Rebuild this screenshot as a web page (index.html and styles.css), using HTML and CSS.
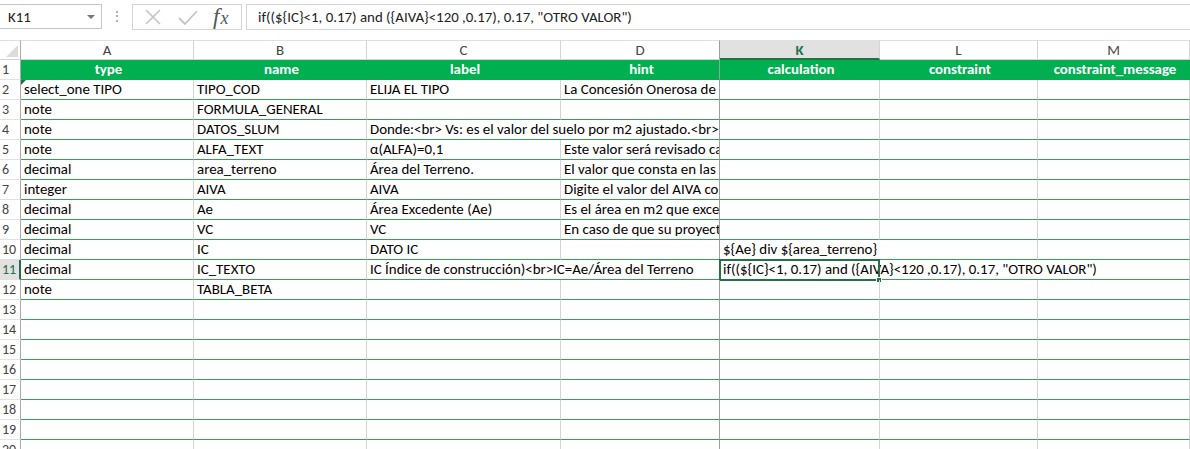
FILE: index.html
```html
<!DOCTYPE html>
<html lang="es">
<head>
<meta charset="utf-8">
<title>Hoja</title>
<link rel="stylesheet" href="styles.css">
</head>
<body>
<div class="app">
  <div class="fbar">
    <div class="namebox"><span class="nb-text">K11</span><span class="nb-arrow"></span></div>
    <div class="vdots">⋮</div>
    <div class="btns">
      <svg class="ic" width="20" height="20" viewBox="0 0 20 20"><path d="M3 3 L17 17 M17 3 L3 17" stroke="#c4c4c4" stroke-width="1.6" fill="none"/></svg>
      <svg class="ic" width="22" height="20" viewBox="0 0 22 20"><path d="M2 11 L8 17 L20 4" stroke="#c4c4c4" stroke-width="1.8" fill="none"/></svg>
      <span class="fx">f<i class="x">x</i></span>
    </div>
    <div class="formula">if((${IC}&lt;1, 0.17) and ({AIVA}&lt;120 ,0.17), 0.17, "OTRO VALOR")</div>
  </div>
  <div class="sheet">
    <div class="corner"><span class="tri"></span></div>
    <div class="ch">A</div><div class="ch">B</div><div class="ch">C</div><div class="ch pane">D</div><div class="ch sel">K</div><div class="ch">L</div><div class="ch">M</div>

    <div class="rh">1</div>
    <div class="c hd">type</div><div class="c hd">name</div><div class="c hd">label</div><div class="c hd pane">hint</div><div class="c hd">calculation</div><div class="c hd">constraint</div><div class="c hd last">constraint_message</div>

    <div class="rh">2</div>
    <div class="c"><span class="err"></span>select_one TIPO</div><div class="c">TIPO_COD</div><div class="c">ELIJA EL TIPO</div><div class="c pane">La Concesión Onerosa de</div><div class="c"></div><div class="c"></div><div class="c"></div>

    <div class="rh">3</div>
    <div class="c">note</div><div class="c">FORMULA_GENERAL</div><div class="c"></div><div class="c pane"></div><div class="c"></div><div class="c"></div><div class="c"></div>

    <div class="rh">4</div>
    <div class="c">note</div><div class="c">DATOS_SLUM</div><div class="c span2 pane">Donde:&lt;br&gt; Vs: es el valor del suelo por m2 ajustado.&lt;br&gt;</div><div class="c"></div><div class="c"></div><div class="c"></div>

    <div class="rh">5</div>
    <div class="c">note</div><div class="c">ALFA_TEXT</div><div class="c">α(ALFA)=0,1</div><div class="c pane">Este valor será revisado ca</div><div class="c"></div><div class="c"></div><div class="c"></div>

    <div class="rh">6</div>
    <div class="c">decimal</div><div class="c">area_terreno</div><div class="c">Área del Terreno.</div><div class="c pane">El valor que consta en las</div><div class="c"></div><div class="c"></div><div class="c"></div>

    <div class="rh">7</div>
    <div class="c">integer</div><div class="c">AIVA</div><div class="c">AIVA</div><div class="c pane">Digite el valor del AIVA co</div><div class="c"></div><div class="c"></div><div class="c"></div>

    <div class="rh">8</div>
    <div class="c">decimal</div><div class="c">Ae</div><div class="c">Área Excedente (Ae)</div><div class="c pane">Es el área en m2 que exce</div><div class="c"></div><div class="c"></div><div class="c"></div>

    <div class="rh">9</div>
    <div class="c">decimal</div><div class="c">VC</div><div class="c">VC</div><div class="c pane">En caso de que su proyect</div><div class="c"></div><div class="c"></div><div class="c"></div>

    <div class="rh">10</div>
    <div class="c">decimal</div><div class="c">IC</div><div class="c">DATO IC</div><div class="c pane"></div><div class="c span2">${Ae} div ${area_terreno}</div><div class="c"></div>

    <div class="rh rsel">11</div>
    <div class="c">decimal</div><div class="c">IC_TEXTO</div><div class="c span2 pane">IC Índice de construcción)&lt;br&gt;IC=Ae/Área del Terreno</div><div class="c span3 active"><span class="selbox"><span class="handle"></span></span>if((${IC}&lt;1, 0.17) and ({AIVA}&lt;120 ,0.17), 0.17, "OTRO VALOR")</div>

    <div class="rh">12</div>
    <div class="c">note</div><div class="c">TABLA_BETA</div><div class="c"></div><div class="c pane"></div><div class="c"></div><div class="c"></div><div class="c"></div>

    <div class="rh">13</div><div class="c"></div><div class="c"></div><div class="c"></div><div class="c pane"></div><div class="c"></div><div class="c"></div><div class="c"></div>
    <div class="rh">14</div><div class="c"></div><div class="c"></div><div class="c"></div><div class="c pane"></div><div class="c"></div><div class="c"></div><div class="c"></div>
    <div class="rh">15</div><div class="c"></div><div class="c"></div><div class="c"></div><div class="c pane"></div><div class="c"></div><div class="c"></div><div class="c"></div>
    <div class="rh">16</div><div class="c"></div><div class="c"></div><div class="c"></div><div class="c pane"></div><div class="c"></div><div class="c"></div><div class="c"></div>
    <div class="rh">17</div><div class="c"></div><div class="c"></div><div class="c"></div><div class="c pane"></div><div class="c"></div><div class="c"></div><div class="c"></div>
    <div class="rh">18</div><div class="c"></div><div class="c"></div><div class="c"></div><div class="c pane"></div><div class="c"></div><div class="c"></div><div class="c"></div>
    <div class="rh">19</div><div class="c"></div><div class="c"></div><div class="c"></div><div class="c pane"></div><div class="c"></div><div class="c"></div><div class="c"></div>
    <div class="rh">20</div><div class="c"></div><div class="c"></div><div class="c"></div><div class="c pane"></div><div class="c"></div><div class="c"></div><div class="c"></div>
  </div>
</div>
</body>
</html>
```
FILE: styles.css
```css
* { box-sizing: border-box; }
html, body { margin: 0; padding: 0; background: #fff; }
body {
  width: 1190px;
  height: 449px;
  overflow: hidden;
  font-family: Carlito, Lato, "Liberation Sans", sans-serif;
  font-size: 14.9px;
  color: #000;
}
.app { display: flex; flex-direction: column; }

/* formula bar */
.fbar {
  height: 40px;
  display: flex;
  align-items: flex-start;
  padding-top: 4px;
}
.namebox {
  width: 102px;
  height: 25px;
  border: 1px solid #c6c6c6;
  border-left: none;
  display: flex;
  align-items: center;
  justify-content: space-between;
  padding: 0 6px 0 8px;
  color: #222;
}
.nb-arrow {
  width: 0; height: 0;
  border-left: 4px solid transparent;
  border-right: 4px solid transparent;
  border-top: 4px solid #777;
}
.vdots {
  width: 30px;
  text-align: center;
  color: #999;
  font-size: 14px;
  line-height: 25px;
}
.btns {
  width: 110px;
  height: 26px;
  border: 1px solid #d4d4d4;
  display: flex;
  align-items: center;
  gap: 14px;
  padding-left: 10px;
}
.fx {
  font-family: "Liberation Serif", serif;
  font-style: italic;
  font-size: 23px;
  line-height: 22px;
  color: #555;
  letter-spacing: 1px;
}
.fx .x { font-size: 18px; }
.formula {
  flex: 1;
  margin-left: 4px;
  height: 26px;
  border: 1px solid #d4d4d4;
  border-right: none;
  padding-left: 11px;
  line-height: 24px;
  color: #222;
  white-space: nowrap;
}

/* grid */
.sheet {
  display: grid;
  grid-template-columns: 21px 173px 173px 194px 159px 160px 158px 1fr;
  grid-auto-rows: 20px;
}
.corner {
  border-right: 1px solid #ababab;
  border-bottom: 1px solid #d4d4d4;
  border-top: 1px solid #e0e0e0;
  position: relative;
  background: #fff;
}
.tri {
  position: absolute;
  right: 2px; bottom: 2px;
  width: 0; height: 0;
  border-left: 12px solid transparent;
  border-bottom: 12px solid #dcdcdc;
}
.ch {
  border-right: 1px solid #d4d4d4;
  border-bottom: 1px solid #d4d4d4;
  border-top: 1px solid #e0e0e0;
  text-align: center;
  color: #444;
  line-height: 18px;
}
.ch.pane { border-right-color: #9e9e9e; }
.ch.sel {
  background: #e1e1e1;
  color: #217346;
  font-weight: bold;
  border-bottom: 2px solid #217346;
}
.rh {
  border-right: 1px solid #ababab;
  border-bottom: 1px solid #e1e1e1;
  color: #444;
  padding-left: 2px;
  font-size: 14px;
  line-height: 19px;
  font-variant-numeric: tabular-nums;
}
.rh.rsel {
  background: #e1e1e1;
  color: #217346;
  border-right: 2px solid #217346;
}
.c {
  border-right: 1px solid #d4d4d4;
  border-bottom: 1px solid #35a05a;
  padding-left: 3px;
  line-height: 19px;
  white-space: nowrap;
  overflow: hidden;
  position: relative;
}
.c.pane { border-right-color: #9e9e9e; }
.c.span2 { grid-column: span 2; }
.c.span3 { grid-column: span 3; }
.c.hd {
  background: #00b050;
  color: #fff;
  font-weight: bold;
  text-align: center;
  border-right-color: #00b050;
  border-bottom-color: #00b050;
}
.c.hd.pane { border-right-color: #9e9e9e; }
.err {
  position: absolute;
  left: 0; top: 0;
  width: 0; height: 0;
  border-top: 5px solid #217346;
  border-right: 5px solid transparent;
}
.c.active { overflow: visible; }
.selbox {
  position: absolute;
  left: -1px; top: -1px;
  width: 161px; height: 22px;
  border: 2px solid #217346;
}
.handle {
  position: absolute;
  right: -4px; bottom: -4px;
  width: 6px; height: 6px;
  background: #217346;
  border: 1px solid #fff;
}
```
